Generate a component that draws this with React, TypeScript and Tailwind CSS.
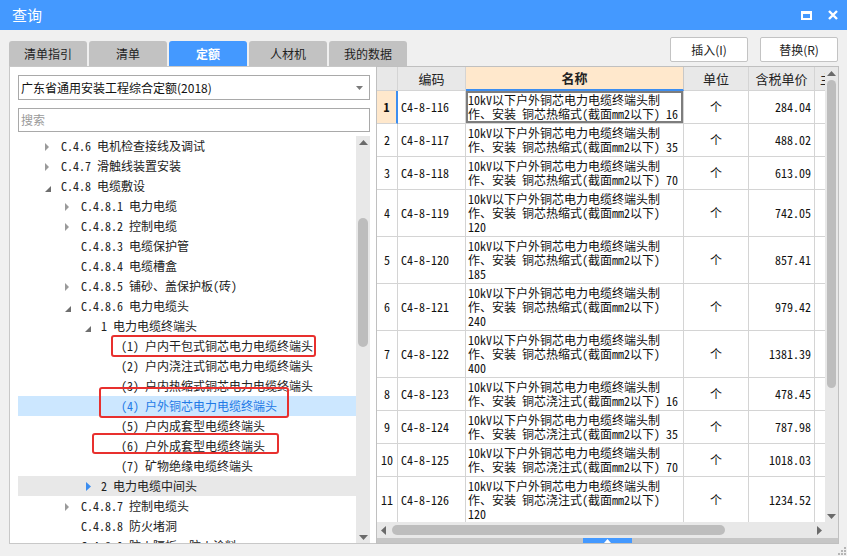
import React from 'react'

// 宋体风格的等宽中文字体，找不到时退回普通中文字体
const MONO = "font-['Noto_Sans_Mono_CJK_SC','Noto_Sans_CJK_SC',monospace]"
const SANS = "font-['Noto_Sans_CJK_SC','Noto_Sans',sans-serif]"

type TreeNode = {
  level: 1 | 2 | 3 | 4
  label: string
  icon?: 'closed' | 'open' | 'blue'
  selected?: boolean
  hover?: boolean
}

const TREE: TreeNode[] = [
  { level: 1, label: 'C.4.6 电机检查接线及调试', icon: 'closed' },
  { level: 1, label: 'C.4.7 滑触线装置安装', icon: 'closed' },
  { level: 1, label: 'C.4.8 电缆敷设', icon: 'open' },
  { level: 2, label: 'C.4.8.1 电力电缆', icon: 'closed' },
  { level: 2, label: 'C.4.8.2 控制电缆', icon: 'closed' },
  { level: 2, label: 'C.4.8.3 电缆保护管' },
  { level: 2, label: 'C.4.8.4 电缆槽盒' },
  { level: 2, label: 'C.4.8.5 铺砂、盖保护板(砖)', icon: 'closed' },
  { level: 2, label: 'C.4.8.6 电力电缆头', icon: 'open' },
  { level: 3, label: '1 电力电缆终端头', icon: 'open' },
  { level: 4, label: '(1) 户内干包式铜芯电力电缆终端头' },
  { level: 4, label: '(2) 户内浇注式铜芯电力电缆终端头' },
  { level: 4, label: '(3) 户内热缩式铜芯电力电缆终端头' },
  { level: 4, label: '(4) 户外铜芯电力电缆终端头', selected: true },
  { level: 4, label: '(5) 户内成套型电缆终端头' },
  { level: 4, label: '(6) 户外成套型电缆终端头' },
  { level: 4, label: '(7) 矿物绝缘电缆终端头' },
  { level: 3, label: '2 电力电缆中间头', icon: 'blue', hover: true },
  { level: 2, label: 'C.4.8.7 控制电缆头', icon: 'closed' },
  { level: 2, label: 'C.4.8.8 防火堵洞' },
  { level: 2, label: 'C.4.8.9 防火隔板、防火涂料' },
]

const INDENT: Record<number, string> = {
  1: 'pl-[27px]',
  2: 'pl-[47px]',
  3: 'pl-[67px]',
  4: 'pl-[87px]',
}

type Row = { n: number; code: string; lines: string[]; price: string }

const L1 = '10kV以下户外铜芯电力电缆终端头制'
const HOT = '作、安装 铜芯热缩式(截面mm2以下)'
const POUR = '作、安装 铜芯浇注式(截面mm2以下)'

const ROWS: Row[] = [
  { n: 1, code: 'C4-8-116', lines: [L1, HOT + ' 16'], price: '284.04' },
  { n: 2, code: 'C4-8-117', lines: [L1, HOT + ' 35'], price: '488.02' },
  { n: 3, code: 'C4-8-118', lines: [L1, HOT + ' 70'], price: '613.09' },
  { n: 4, code: 'C4-8-119', lines: [L1, HOT, '120'], price: '742.05' },
  { n: 5, code: 'C4-8-120', lines: [L1, HOT, '185'], price: '857.41' },
  { n: 6, code: 'C4-8-121', lines: [L1, HOT, '240'], price: '979.42' },
  { n: 7, code: 'C4-8-122', lines: [L1, HOT, '400'], price: '1381.39' },
  { n: 8, code: 'C4-8-123', lines: [L1, POUR + ' 16'], price: '478.45' },
  { n: 9, code: 'C4-8-124', lines: [L1, POUR + ' 35'], price: '787.98' },
  { n: 10, code: 'C4-8-125', lines: [L1, POUR + ' 70'], price: '1018.03' },
  { n: 11, code: 'C4-8-126', lines: [L1, POUR, '120'], price: '1234.52' },
]

function TreeIcon({ kind }: { kind?: TreeNode['icon'] }) {
  if (kind === 'closed')
    return (
      <svg width="5" height="8" viewBox="0 0 5 8" className="mt-[1px]">
        <path d="M0 0L4 4L0 8Z" fill="#9a9a9a" />
      </svg>
    )
  if (kind === 'open')
    return (
      <svg width="6" height="6" viewBox="0 0 6 6" className="mt-[6px]">
        <path d="M6 0L6 6L0 6Z" fill="#6e6e6e" />
      </svg>
    )
  if (kind === 'blue')
    return (
      <svg width="6" height="9" viewBox="0 0 6 9" className="ml-[1px] mt-[1px]">
        <path d="M0 0L5 4.5L0 9Z" fill="#3b8df0" />
      </svg>
    )
  return null
}

function Arrow({ dir }: { dir: 'up' | 'down' | 'left' | 'right' }) {
  const d = {
    up: 'M0 5L4.5 0L9 5Z',
    down: 'M0 0L9 0L4.5 5Z',
    left: 'M5 0L5 9L0 4.5Z',
    right: 'M0 0L5 4.5L0 9Z',
  }[dir]
  const vertical = dir === 'up' || dir === 'down'
  return (
    <svg width={vertical ? 9 : 5} height={vertical ? 5 : 9} viewBox={vertical ? '0 0 9 5' : '0 0 5 9'}>
      <path d={d} fill="#6a6a6a" />
    </svg>
  )
}

function Tab({ label, active }: { label: string; active?: boolean }) {
  return (
    <div
      className={
        'w-[78px] h-[25px] rounded-t-[3px] flex items-center justify-center text-[12px] ' +
        (active ? 'bg-[#4499ff] text-white font-bold' : 'bg-[#c2c2c2] text-[#222]')
      }
    >
      {label}
    </div>
  )
}

function Tree() {
  return (
    <div className="flex h-[407px] mt-[4px]">
      <div className={'flex-1 overflow-hidden text-[12px] text-[#222] ' + MONO}>
        {TREE.map((t, i) => (
          <div
            key={i}
            className={
              'h-[20px] flex items-center whitespace-nowrap ' +
              INDENT[t.level] +
              (t.selected ? ' bg-[#cce7ff] text-[#1f7ae6]' : t.hover ? ' bg-[#e8e8e8]' : '')
            }
          >
            <div className="w-[16px] h-[20px] flex items-center">
              <TreeIcon kind={t.icon} />
            </div>
            <span className="leading-[20px]">{t.label}</span>
          </div>
        ))}
      </div>
      <div className="w-[14px] bg-[#e8e8e8] flex flex-col items-center">
        <div className="h-[12px] flex items-center justify-center">
          <Arrow dir="up" />
        </div>
        <div className="mt-[70px] w-[10px] h-[129px] rounded-full bg-[#bdbdbd]" />
        <div className="flex-1" />
        <div className="h-[12px] flex items-center justify-center">
          <Arrow dir="down" />
        </div>
      </div>
    </div>
  )
}

function LeftPanel() {
  return (
    <div className="w-[367px] h-[478px] bg-white border border-r-0 border-[#c8c8c8] pt-[8px] pl-[8px] pr-[6px] flex flex-col">
      <div className="h-[25px] border border-[#a9a9a9] flex items-center pl-[2px] pr-[6px]">
        <span className={'flex-1 text-[12px] text-[#111] ' + SANS}>广东省通用安装工程综合定额(2018)</span>
        <svg width="7" height="4" viewBox="0 0 7 4">
          <path d="M0 0L7 0L3.5 4Z" fill="#7a7a7a" />
        </svg>
      </div>
      <div className="h-[24px] mt-[8px] border border-[#a9a9a9] flex items-center pl-[2px]">
        <span className={'text-[12px] text-[#9a9a9a] ' + SANS}>搜索</span>
      </div>
      <Tree />
    </div>
  )
}

const CELL = 'shrink-0 border-r border-b border-[#d4d4d4] h-full'

function TablePanel() {
  return (
    <div className="w-[463px] h-[478px] bg-white border border-[#c0c0c0] flex flex-col">
      <div className="flex h-[455px]">
        <div className="flex-1 overflow-hidden">
          {/* 表头 */}
          <div className={'flex h-[24px] text-[13px] text-[#222] ' + SANS}>
            <div className={CELL + ' w-[21px] bg-[#e8e8e8] border-[#c8c8c8]'} />
            <div className={CELL + ' w-[68px] bg-[#e8e8e8] border-[#c8c8c8] flex items-center justify-center'}>编码</div>
            <div className="shrink-0 w-[218px] h-full bg-[#ffe8cc] border-r border-[#c8c8c8] border-b-2 border-b-[#3d8ef0] flex items-center justify-center font-bold">
              名称
            </div>
            <div className={CELL + ' w-[65px] bg-[#e8e8e8] border-[#c8c8c8] flex items-center justify-center'}>单位</div>
            <div className={CELL + ' w-[66px] bg-[#e8e8e8] border-[#c8c8c8] flex items-center justify-center'}>含税单价</div>
            <div className={CELL + ' w-[80px] bg-[#e8e8e8] border-[#c8c8c8] flex items-center pl-[5px] whitespace-nowrap'}>主材费</div>
          </div>
          {ROWS.map((r) => {
            const first = r.n === 1
            return (
              <div
                key={r.n}
                className={'flex text-[12px] text-[#111] ' + MONO + (r.lines.length > 2 ? ' h-[47px]' : ' h-[33px]')}
              >
                <div
                  className={
                    CELL +
                    ' w-[21px] flex items-center justify-center ' +
                    (first ? 'bg-[#ffe8cc] font-bold border-r-2 border-r-[#3d8ef0]' : '')
                  }
                >
                  {r.n}
                </div>
                <div className={CELL + ' w-[68px] flex items-center pl-[3px]'}>{r.code}</div>
                <div
                  className={
                    CELL +
                    ' w-[218px] flex flex-col justify-center pl-[2px] leading-[14px] whitespace-nowrap' +
                    (first ? ' shadow-[inset_0_0_0_2px_#7d7d7d]' : '')
                  }
                >
                  {r.lines.map((l, i) => (
                    <div key={i}>{l}</div>
                  ))}
                </div>
                <div className={CELL + ' w-[65px] flex items-center justify-center ' + SANS}>个</div>
                <div className={CELL + ' w-[66px] flex items-center justify-end pr-[3px]'}>{r.price}</div>
                <div className={CELL + ' w-[80px]'} />
              </div>
            )
          })}
        </div>
        <div className="w-[13px] bg-[#e8e8e8] flex flex-col items-center">
          <div className="h-[12px] flex items-center justify-center">
            <Arrow dir="up" />
          </div>
          <div className="mt-[1px] w-[9px] h-[308px] rounded-full bg-[#bdbdbd]" />
          <div className="flex-1" />
          <div className="h-[12px] flex items-center justify-center">
            <Arrow dir="down" />
          </div>
        </div>
      </div>
      <div className="h-[16px] flex bg-[#e8e8e8]">
        <div className="flex-1 flex items-center">
          <div className="w-[12px] flex items-center justify-center">
            <Arrow dir="left" />
          </div>
          <div className="ml-[3px] w-[333px] h-[10px] rounded-full bg-[#bdbdbd]" />
          <div className="flex-1" />
          <div className="w-[12px] flex items-center justify-center">
            <Arrow dir="right" />
          </div>
        </div>
        <div className="w-[13px]" />
      </div>
      <div className="flex-1 bg-[#c6c6c6] flex">
        <div className="ml-[206px] w-[49px] h-full bg-[#4499ff] flex items-center justify-center">
          <svg width="7" height="4" viewBox="0 0 7 4">
            <path d="M0 4L3.5 0L7 4Z" fill="#fff" />
          </svg>
        </div>
      </div>
    </div>
  )
}

export default function App() {
  return (
    <div className={'relative w-[847px] h-[556px] overflow-hidden bg-[#f0f0f0] ' + SANS}>
      {/* 标题栏 */}
      <div className="h-[30px] bg-[#4499ff] flex items-center pl-[12px] pr-[9px]">
        <span className="text-[15px] text-white">查询</span>
        <div className="flex-1" />
        <svg width="11" height="9" viewBox="0 0 11 9" className="mr-[16px]">
          <rect x="1" y="1.5" width="9" height="6.5" fill="none" stroke="#fff" strokeWidth="2" />
          <rect x="0" y="0" width="11" height="3" fill="#fff" />
        </svg>
        <svg width="10" height="10" viewBox="0 0 10 10">
          <path d="M1 1L9 9M9 1L1 9" stroke="#fff" strokeWidth="2.4" />
        </svg>
      </div>

      <div className="pt-[7px] pl-[9px] pr-[8px]">
        <div className="flex h-[29px] items-start">
          <div className="flex gap-[2px] mt-[4px]">
            <Tab label="清单指引" />
            <Tab label="清单" />
            <Tab label="定额" active />
            <Tab label="人材机" />
            <Tab label="我的数据" />
          </div>
          <div className="flex-1" />
          <div className="flex gap-[12px] mr-[1px]">
            <button className="w-[78px] h-[25px] bg-white border border-[#c3c3c3] rounded-[2px] text-[12px] text-[#222]">
              插入(I)
            </button>
            <button className="w-[78px] h-[25px] bg-white border border-[#c3c3c3] rounded-[2px] text-[12px] text-[#222]">
              替换(R)
            </button>
          </div>
        </div>
        <div className="flex">
          <LeftPanel />
          <TablePanel />
        </div>
      </div>

      {/* 标注红框 */}
      <div className="absolute left-[111px] top-[335px] w-[205px] h-[22px] border-2 border-[#e8302e] rounded-[3px]" />
      <div className="absolute left-[99px] top-[387px] w-[190px] h-[31px] border-2 border-[#e8302e] rounded-[3px]" />
      <div className="absolute left-[92px] top-[433px] w-[187px] h-[21px] border-2 border-[#e8302e] rounded-[3px]" />

      {/* 右下角拖拽 */}
      <svg width="9" height="9" viewBox="0 0 9 9" className="absolute right-[1px] bottom-[1px]">
        <rect x="7" y="1" width="2" height="2" fill="#b5b5b5" />
        <rect x="4" y="4" width="2" height="2" fill="#b5b5b5" />
        <rect x="7" y="4" width="2" height="2" fill="#b5b5b5" />
        <rect x="1" y="7" width="2" height="2" fill="#b5b5b5" />
        <rect x="4" y="7" width="2" height="2" fill="#b5b5b5" />
        <rect x="7" y="7" width="2" height="2" fill="#b5b5b5" />
      </svg>
    </div>
  )
}
